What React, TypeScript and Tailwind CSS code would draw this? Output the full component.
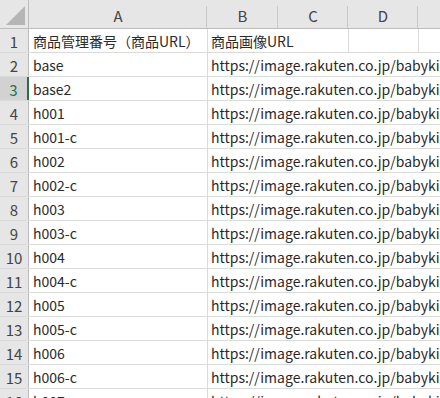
const font = { fontFamily: '"Noto Sans CJK JP", "Noto Sans", sans-serif' };

const rows = [
    "base", "base2", "h001", "h001-c", "h002", "h002-c", "h003", "h003-c",
    "h004", "h004-c", "h005", "h005-c", "h006", "h006-c", "h007",
];

const URL_TEXT = "https://image.rakuten.co.jp/babykids/cabinet/item/h001.jpg";

function RowHead({ n, active }: { n: number; active?: boolean }) {
    return <div className={"w-[29px] shrink-0 flex items-end justify-center pb-[3px] text-[15px] border-r " +
        (active ? "bg-[#d2d2d2] text-[#217346] border-r-[2px] border-[#217346]" : "bg-[#e6e6e6] text-[#444] border-[#bcbcbc]")}>
        {n}
    </div>
}

export default function App() {
    return <div className="w-[440px] h-[398px] overflow-hidden bg-white text-[14px] leading-none text-[#2a2a2a]" style={font}>
        {/* column headers */}
        <div className="flex h-[29px] bg-[#e6e6e6] border-b border-[#bcbcbc] text-[#444] text-[15px]">
            <div className="w-[29px] shrink-0 border-r border-[#bcbcbc] relative">
                <div className="absolute right-[3px] bottom-[3px] w-0 h-0 border-l-[19px] border-l-transparent border-b-[19px] border-b-[#b5b5b5]" />
            </div>
            <div className="w-[178px] shrink-0 flex items-center justify-center pt-[3px] relative">A<div className="absolute right-0 top-[6px] bottom-0 w-px bg-[#c8c8c8]" /></div>
            <div className="w-[71px] shrink-0 flex items-center justify-center pt-[3px] relative">B<div className="absolute right-0 top-[6px] bottom-0 w-px bg-[#c8c8c8]" /></div>
            <div className="w-[70px] shrink-0 flex items-center justify-center pt-[3px] relative">C<div className="absolute right-0 top-[6px] bottom-0 w-px bg-[#c8c8c8]" /></div>
            <div className="w-[70px] shrink-0 flex items-center justify-center pt-[3px] relative">D<div className="absolute right-0 top-[6px] bottom-0 w-px bg-[#c8c8c8]" /></div>
            <div className="flex-1" />
        </div>

        {/* row 1 */}
        <div className="flex h-[24px] border-b border-[#dadada]">
            <RowHead n={1} />
            <div className="w-[179px] shrink-0 border-r border-[#dadada] pl-[4px] flex items-end pb-[4px] whitespace-nowrap overflow-hidden">商品管理番号（商品URL）</div>
            <div className="w-[141px] shrink-0 border-r border-[#dadada] pl-[3px] flex items-end pb-[4px] whitespace-nowrap overflow-hidden">商品画像URL</div>
            <div className="w-[70px] shrink-0 border-r border-[#dadada]" />
            <div className="flex-1" />
        </div>

        {rows.map((r, i) => <div key={r} className="flex h-[24px] border-b border-[#dadada]">
            <RowHead n={i + 2} active={i === 1} />
            <div className="w-[179px] shrink-0 border-r border-[#dadada] pl-[4px] flex items-end pb-[4px] whitespace-nowrap overflow-hidden">{r}</div>
            <div className="flex-1 pl-[3px] flex items-end pb-[4px] whitespace-nowrap overflow-hidden">{URL_TEXT}</div>
        </div>)}
    </div>
}
